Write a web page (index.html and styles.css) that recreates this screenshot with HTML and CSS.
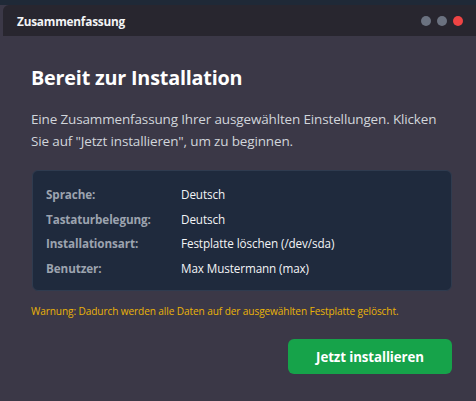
FILE: index.html
```html
<!DOCTYPE html>
<html lang="de">
<head>
<meta charset="utf-8">
<link rel="stylesheet" href="styles.css">
</head>
<body>
<div class="screen">
  <div class="topstrip"></div>
  <div class="titlebar">
    <span class="title">Zusammenfassung</span>
    <div class="dots">
      <span class="dot"></span>
      <span class="dot"></span>
      <span class="dot red"></span>
    </div>
  </div>
  <main class="content">
    <h1 class="heading">Bereit zur Installation</h1>
    <p class="intro">Eine Zusammenfassung Ihrer ausgewählten Einstellungen. Klicken Sie auf "Jetzt installieren", um zu beginnen.</p>
    <div class="card">
      <div class="row"><span class="label">Sprache:</span><span class="value">Deutsch</span></div>
      <div class="row"><span class="label">Tastaturbelegung:</span><span class="value">Deutsch</span></div>
      <div class="row"><span class="label">Installationsart:</span><span class="value">Festplatte löschen (/dev/sda)</span></div>
      <div class="row"><span class="label">Benutzer:</span><span class="value">Max Mustermann (max)</span></div>
    </div>
    <p class="warning">Warnung: Dadurch werden alle Daten auf der ausgewählten Festplatte gelöscht.</p>
    <div class="actions">
      <button class="install">Jetzt installieren</button>
    </div>
  </main>
</div>
</body>
</html>
```

FILE: styles.css
```css
* { box-sizing: border-box; }
html, body {
  margin: 0;
  padding: 0;
  height: 100%;
  background: #3b3847;
  font-family: "Open Sans", "Noto Sans", sans-serif;
}
.screen {
  height: 401px;
  display: flex;
  flex-direction: column;
  background: #3b3847;
  overflow: hidden;
}
.topstrip {
  height: 5px;
  background: #1f2937;
  flex: none;
}
.titlebar {
  height: 31px;
  margin-left: 3px;
  background: #28262f;
  border-top-left-radius: 6px;
  display: flex;
  align-items: center;
  justify-content: space-between;
  padding: 0 16px 0 14px;
  flex: none;
}
.title {
  color: #f3f4f6;
  font-size: 11.8px;
  font-weight: 700;
  letter-spacing: -0.2px;
}
.dots {
  display: flex;
  gap: 6px;
  margin-right: -3px;
}
.dot {
  width: 10px;
  height: 10px;
  border-radius: 50%;
  background: #6b7280;
}
.dot.red { background: #ef4444; }
.content {
  padding: 28px 24px 0 31px;
  display: flex;
  flex-direction: column;
}
.heading {
  margin: 0;
  color: #ffffff;
  font-size: 19.8px;
  font-weight: 700;
  line-height: 28px;
  letter-spacing: -0.2px;
}
.intro {
  margin: 16px 0 0 0;
  max-width: 410px;
  color: #d1d5db;
  font-size: 13.5px;
  line-height: 22px;
  letter-spacing: -0.15px;
}
.card {
  margin: 18px 0 0 1px;
  background: #1f2a3d;
  border: 1px solid #2f3b4f;
  border-radius: 6px;
  padding: 11px 14px 10px 13px;
  display: flex;
  flex-direction: column;
}
.row {
  display: flex;
  height: 24.5px;
  align-items: center;
  font-size: 11.7px;
}
.label {
  width: 135px;
  color: #9ca3af;
  font-weight: 700;
  letter-spacing: -0.1px;
}
.value {
  color: #f3f4f6;
  letter-spacing: -0.1px;
}
.warning {
  margin: 12px 0 0 0;
  color: #eab308;
  font-size: 10.1px;
  line-height: 16px;
  letter-spacing: -0.1px;
}
.actions {
  display: flex;
  justify-content: flex-end;
  margin-top: 20px;
}
.install {
  width: 164px;
  height: 35px;
  background: #16a34a;
  border: none;
  border-radius: 6px;
  color: #ffffff;
  font-family: "Open Sans", "Noto Sans", sans-serif;
  font-size: 13.3px;
  font-weight: 700;
  letter-spacing: -0.1px;
}
```
